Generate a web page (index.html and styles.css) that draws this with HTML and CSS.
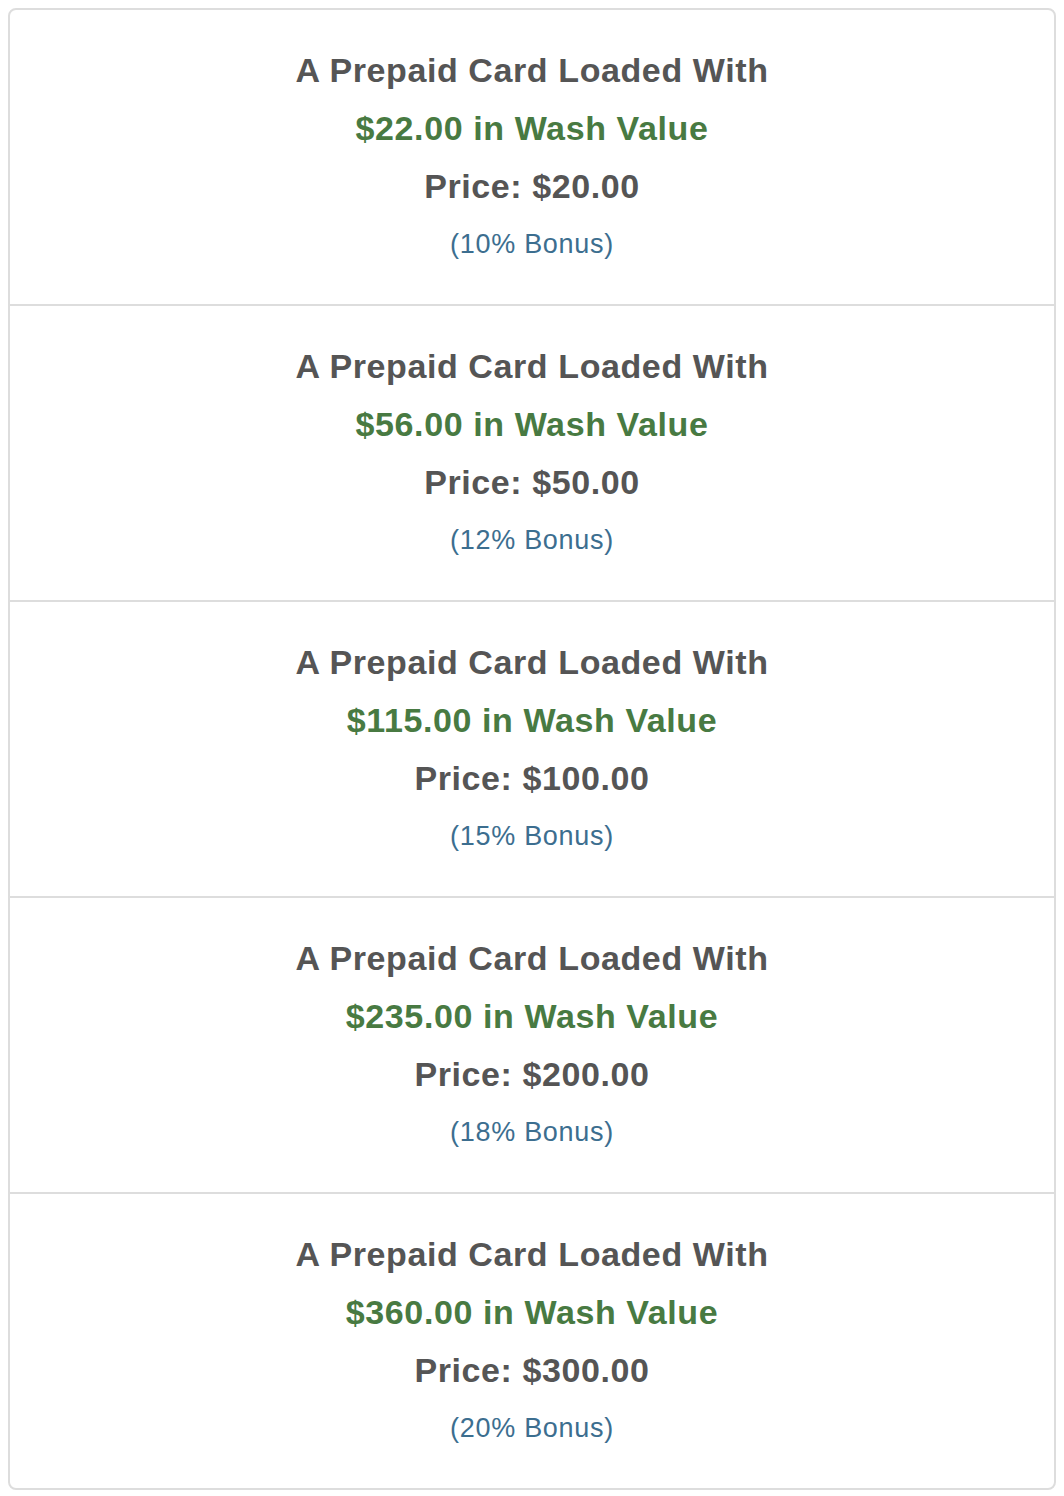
FILE: index.html
```html
<!DOCTYPE html>
<html>
<head>
<meta charset="utf-8">
<link rel="stylesheet" href="styles.css">
</head>
<body>
<div class="list">
  <div class="item">
    <div class="title">A Prepaid Card Loaded With</div>
    <div class="value">$22.00 in Wash Value</div>
    <div class="price">Price: $20.00</div>
    <div class="bonus">(10% Bonus)</div>
  </div>
  <div class="item">
    <div class="title">A Prepaid Card Loaded With</div>
    <div class="value">$56.00 in Wash Value</div>
    <div class="price">Price: $50.00</div>
    <div class="bonus">(12% Bonus)</div>
  </div>
  <div class="item">
    <div class="title">A Prepaid Card Loaded With</div>
    <div class="value">$115.00 in Wash Value</div>
    <div class="price">Price: $100.00</div>
    <div class="bonus">(15% Bonus)</div>
  </div>
  <div class="item">
    <div class="title">A Prepaid Card Loaded With</div>
    <div class="value">$235.00 in Wash Value</div>
    <div class="price">Price: $200.00</div>
    <div class="bonus">(18% Bonus)</div>
  </div>
  <div class="item">
    <div class="title">A Prepaid Card Loaded With</div>
    <div class="value">$360.00 in Wash Value</div>
    <div class="price">Price: $300.00</div>
    <div class="bonus">(20% Bonus)</div>
  </div>
</div>
</body>
</html>
```
FILE: styles.css
```css
html, body {
  margin: 0;
  padding: 0;
  background: #fff;
}
body {
  padding: 8px;
  font-family: "Liberation Sans", Arial, sans-serif;
}
.list {
  border: 2px solid #dddddd;
  border-radius: 8px;
  overflow: hidden;
}
.item {
  padding: 31px 0 31px;
  text-align: center;
  border-top: 2px solid #dddddd;
}
.item:first-child {
  border-top: none;
}
.title, .value, .price {
  font-size: 34px;
  font-weight: bold;
  line-height: 58px;
  letter-spacing: 0.6px;
  color: #555555;
}
.value {
  color: #487a42;
}
.bonus {
  font-size: 27px;
  line-height: 58px;
  letter-spacing: 0.7px;
  color: #3c6e8f;
}
```
